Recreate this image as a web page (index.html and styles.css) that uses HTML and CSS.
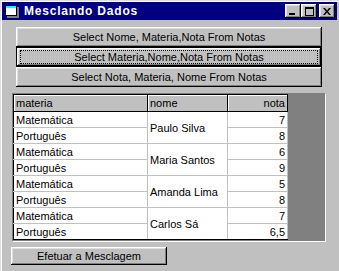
FILE: index.html
```html
<!DOCTYPE html>
<html lang="pt">
<head>
  <meta charset="UTF-8">
  <title>Mesclando Dados</title>
  <link rel="stylesheet" href="styles.css">
</head>
<body>
  <div class="window">
    <div class="titlebar">
      <svg class="app-icon" width="16" height="16" viewBox="0 0 16 16">
        <rect x="1" y="2" width="12" height="11" fill="#fff"/>
        <rect x="1" y="2" width="12" height="3" fill="#00ffff"/>
        <rect x="3" y="13" width="12" height="2" fill="#808080"/>
        <rect x="13" y="4" width="2" height="11" fill="#808080"/>
        <rect x="1.5" y="2.5" width="11" height="10" fill="none" stroke="#000"/>
      </svg>
      <span class="title">Mesclando Dados</span>
      <div class="title-buttons">
        <button class="tbtn"><svg width="8" height="7"><rect x="0" y="5" width="6" height="2" fill="#000"/></svg></button>
        <button class="tbtn"><svg width="9" height="9"><rect x="0.5" y="0.5" width="8" height="8" fill="none" stroke="#000"/><rect x="0" y="0" width="9" height="2" fill="#000"/></svg></button>
        <button class="tbtn close"><svg width="8" height="7"><path d="M0 0h2l2 2.5L6 0h2L5 3.5 8 7H6L4 4.5 2 7H0l3-3.5z" fill="#000"/></svg></button>
      </div>
    </div>

    <div class="queries">
      <button class="btn">Select Nome, Materia,Nota From Notas</button>
      <button class="btn focused"><span class="focus">Select Materia,Nome,Nota From Notas</span></button>
      <button class="btn">Select Nota, Materia, Nome From Notas</button>
    </div>

    <div class="grid">
      <table>
        <tr>
          <th class="c-materia">materia</th>
          <th class="c-nome">nome</th>
          <th class="c-nota num">nota</th>
        </tr>
        <tr><td>Matemática</td><td rowspan="2" class="nome">Paulo Silva</td><td class="num">7</td></tr>
        <tr><td>Português</td><td class="num">8</td></tr>
        <tr><td>Matemática</td><td rowspan="2" class="nome">Maria Santos</td><td class="num">6</td></tr>
        <tr><td>Português</td><td class="num">9</td></tr>
        <tr><td>Matemática</td><td rowspan="2" class="nome">Amanda Lima</td><td class="num">5</td></tr>
        <tr><td>Português</td><td class="num">8</td></tr>
        <tr><td>Matemática</td><td rowspan="2" class="nome last">Carlos Sá</td><td class="num">7</td></tr>
        <tr><td>Português</td><td class="num">6,5</td></tr>
      </table>
    </div>

    <button class="btn merge">Efetuar a Mesclagem</button>
  </div>
</body>
</html>
```

FILE: styles.css
```css
body { margin: 0; background: #c0c0c0; font-family: "Liberation Sans", Arial, sans-serif; font-size: 11px; color: #000; }
.window { height: 271px; padding: 2px; box-sizing: border-box; box-shadow: inset 1px 1px #dfdfdf, inset 2px 2px #fff; }

.titlebar { display: flex; align-items: center; height: 18px; background: #000080; color: #fff; padding: 0 2px 0 2px; }
.app-icon { margin-right: 4px; }
.title { font-weight: bold; font-size: 12px; letter-spacing: 0.8px; flex: 1; }
.title-buttons { display: flex; }
.tbtn { width: 16px; height: 14px; padding: 0; border: 0; background: #c0c0c0; display: flex; align-items: center; justify-content: center;
  box-shadow: inset -1px -1px #000, inset 1px 1px #fff, inset -2px -2px #808080, inset 2px 2px #dfdfdf; }
.tbtn.close { margin-left: 2px; }

.btn { display: block; font-family: inherit; font-size: 11px; color: #000; background: #c0c0c0; border: 0; padding: 0; width: 100%; height: 20px;
  box-shadow: inset -1px -1px #000, inset 1px 1px #fff, inset -2px -2px #808080, inset 2px 2px #dfdfdf; }
.btn.focused { border: 1px solid #000; }
.focus { display: block; margin: 0 3px; border: 1px dotted #000; line-height: 12px; }
.queries { margin: 7px 15px 0 14px; }

.grid { margin: 6px 11px 0 10px; height: 149px; box-sizing: border-box; background: #808080; border: 1px solid; border-color: #808080 #fff #fff #808080; }
.grid table { border-collapse: collapse; border-left: 1px solid #000; border-top: 1px solid #000; }
.grid th { background: #c0c0c0; font-weight: normal; text-align: left; height: 16px; padding: 0 2px; border-right: 1px solid #000; border-bottom: 1px solid #000; box-shadow: inset 1px 1px #fff; }
.grid td { background: #fff; height: 15px; padding: 0 2px; border-right: 1px solid #c0c0c0; border-bottom: 1px solid #c0c0c0; white-space: nowrap; }
.grid tr:last-child td, .grid td.last { border-bottom-color: #000; }
.c-materia { width: 129px; }
.c-nome { width: 75px; }
.c-nota { width: 55px; }
.num { text-align: right !important; }

.merge { width: 156px; height: 18px; margin: 5px 0 0 9px; }
```
